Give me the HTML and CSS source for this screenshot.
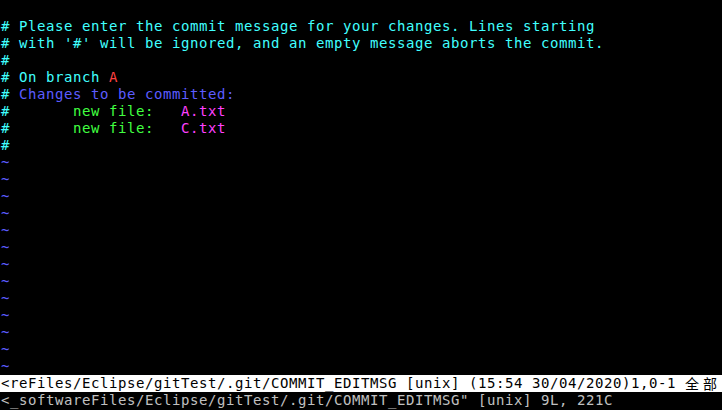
FILE: index.html
```html
<!DOCTYPE html>
<html>
<head>
<meta charset="utf-8">
<link rel="stylesheet" href="styles.css">
</head>
<body>
<div class="term">
<div class="line"> </div>
<div class="line cy"># Please enter the commit message for your changes. Lines starting</div>
<div class="line cy"># with '#' will be ignored, and an empty message aborts the commit.</div>
<div class="line cy">#</div>
<div class="line cy"># On branch <span class="rd">A</span></div>
<div class="line cy"># <span class="bl">Changes to be committed:</span></div>
<div class="line cy">#       <span class="gr">new file:</span>   <span class="mg">A.txt</span></div>
<div class="line cy">#       <span class="gr">new file:</span>   <span class="mg">C.txt</span></div>
<div class="line cy">#</div>
<div class="line bl">~</div>
<div class="line bl">~</div>
<div class="line bl">~</div>
<div class="line bl">~</div>
<div class="line bl">~</div>
<div class="line bl">~</div>
<div class="line bl">~</div>
<div class="line bl">~</div>
<div class="line bl">~</div>
<div class="line bl">~</div>
<div class="line bl">~</div>
<div class="line bl">~</div>
<div class="line bl">~</div>
<div class="line status"><span class="st">&lt;reFiles/Eclipse/gitTest/.git/COMMIT_EDITMSG [unix] (15:54 30/04/2020)1,0-1 </span><span class="wide">全部</span></div>
<div class="line msg">&lt;_softwareFiles/Eclipse/gitTest/.git/COMMIT_EDITMSG" [unix] 9L, 221C</div>
</div>
</body>
</html>
```
FILE: styles.css
```css
html, body {
  margin: 0;
  padding: 0;
  background: #000;
}
body {
  width: 722px;
  height: 410px;
  overflow: hidden;
}
.term {
  padding-top: 1px;
  font-family: "DejaVu Sans Mono", "Noto Sans CJK SC", monospace;
  font-size: 14px;
  letter-spacing: 0.57px;
  line-height: 17px;
}
.line {
  height: 17px;
  white-space: pre;
  padding-left: 1px;
}
.cy { color: #40ffff; }
.bl { color: #5c5cff; }
.rd { color: #ff4040; }
.gr { color: #40ff40; }
.mg { color: #ff40ff; }
.status {
  background: #fff;
  color: #000;
  display: flex;
  align-items: flex-start;
  line-height: 16px;
}
.st {
  font-family: "DejaVu Sans Mono", monospace;
}
.msg { color: #c0c0c0; }
.wide {
  font-family: "Noto Sans CJK SC", sans-serif;
  letter-spacing: 4px;
}
```
